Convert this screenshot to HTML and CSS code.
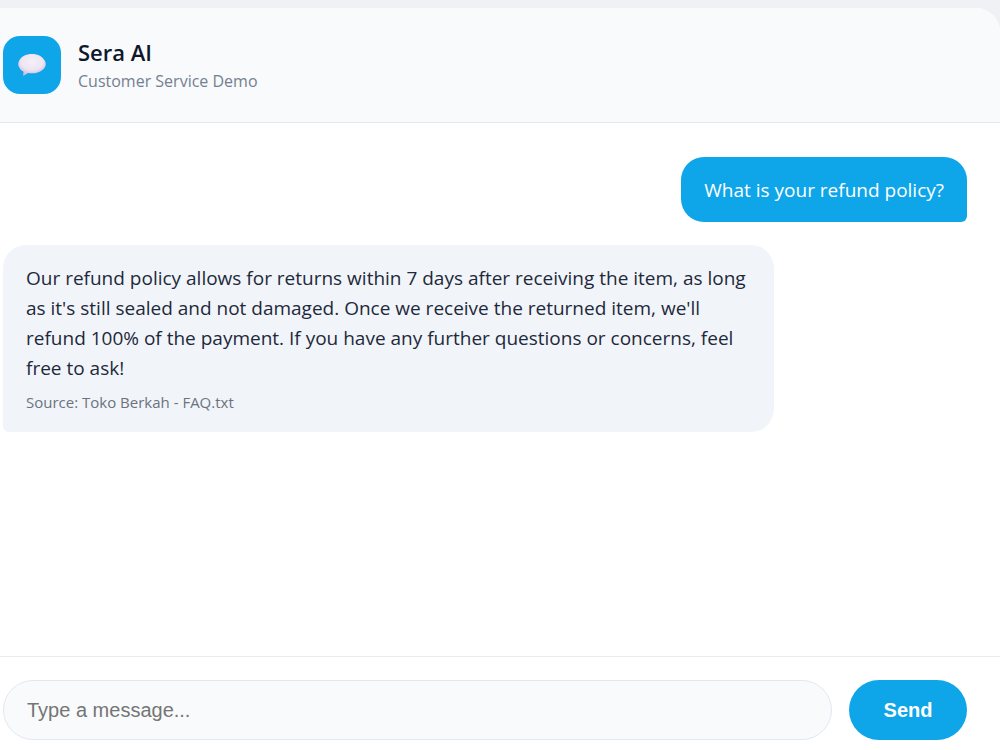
FILE: index.html
```html
<!DOCTYPE html>
<html lang="en">
<head>
<meta charset="utf-8">
<title>Sera AI</title>
<link rel="stylesheet" href="styles.css">
</head>
<body>
<main class="chat">
  <header class="chat-header">
    <div class="logo">
      <svg viewBox="0 0 28 22" width="28" height="22" aria-hidden="true">
        <defs>
          <radialGradient id="bubble" cx="0.5" cy="0.35" r="0.65">
            <stop offset="0" stop-color="#f4eff8"/>
            <stop offset="0.6" stop-color="#eee5f3"/>
            <stop offset="1" stop-color="#cdb9df"/>
          </radialGradient>
        </defs>
        <path fill="url(#bubble)" d="M14 0C8 0 3 2.500 1 7c-1 2-1 4 0 6 1 2 2.500 3.500 4.300 4.500.3 1.200.1 2.500-.3 3.500-.1.500.3.700.8.500 1.700-.6 3-1.700 4-2.500 1.200.2 2.800.3 4.200.3 6 0 10.500-2.300 13-6.300 1-2 1-4 0-6C24.500 2.500 20 0 14 0z"/>
      </svg>
    </div>
    <div>
      <h1 class="title">Sera AI</h1>
      <p class="subtitle">Customer Service Demo</p>
    </div>
  </header>
  <section class="messages">
    <div class="message user">What is your refund policy?</div>
    <div class="message bot">
      <p class="text">Our refund policy allows for returns within 7 days after receiving the item, as long as it's still sealed and not damaged. Once we receive the returned item, we'll refund 100% of the payment. If you have any further questions or concerns, feel free to ask!</p>
      <p class="source">Source: Toko Berkah - FAQ.txt</p>
    </div>
  </section>
  <form class="composer">
    <input class="field" type="text" placeholder="Type a message..." aria-label="Message">
    <button class="send" type="button">Send</button>
  </form>
</main>
</body>
</html>
```
FILE: styles.css
```css
* { box-sizing: border-box; }
body {
  margin: 0;
  padding-top: 8px;
  height: 100vh;
  background: #f0f1f5;
  font-family: "Open Sans", "Noto Sans", sans-serif;
  color: #1e293b;
}
h1, p { margin: 0; }
.chat {
  height: 100%;
  display: flex;
  flex-direction: column;
  background: #fff;
  border-radius: 0 24px 0 0;
  overflow: hidden;
}
.chat-header {
  display: flex;
  align-items: center;
  gap: 17px;
  padding: 28px 33px 28px 3px;
  background: #f8fafc;
  border-bottom: 1px solid #e2e8f0;
}
.logo {
  width: 58px;
  height: 58px;
  display: flex;
  align-items: center;
  justify-content: center;
  border-radius: 17px;
  background: #0ea5e9;
}
.title { font-size: 22px; line-height: 32px; font-weight: 600; color: #0f172a; }
.subtitle { font-size: 16px; line-height: 26px; color: #748091; }
.messages {
  flex: 1;
  display: flex;
  flex-direction: column;
  gap: 23px;
  padding: 34px 33px 34px 3px;
}
.message {
  padding: 18px 23px 17px;
  font-size: 19px;
  line-height: 30px;
  border-radius: 23px;
}
.user {
  align-self: flex-end;
  background: #0ea5e9;
  color: #fff;
  border-bottom-right-radius: 6px;
}
.bot {
  align-self: flex-start;
  max-width: 80%;
  background: #f1f5f9;
  border-bottom-left-radius: 6px;
}
.source { margin-top: 6px; font-size: 15px; line-height: 26px; color: #6b7280; }
.composer {
  display: flex;
  gap: 17px;
  padding: 23px 33px 10px 3px;
  border-top: 1px solid #e8ecf1;
}
.field {
  flex: 1;
  min-width: 0;
  height: 60px;
  padding: 0 23px;
  border: 1px solid #e2e8f0;
  border-radius: 30px;
  background: #f8fafc;
  color: #1e293b;
  font: 20px "Liberation Sans", Arial, sans-serif;
}
.send {
  min-width: 118px;
  padding: 0 34px;
  border: 0;
  border-radius: 30px;
  background: #0ea5e9;
  color: #fff;
  font: bold 20px "Liberation Sans", Arial, sans-serif;
}
```
